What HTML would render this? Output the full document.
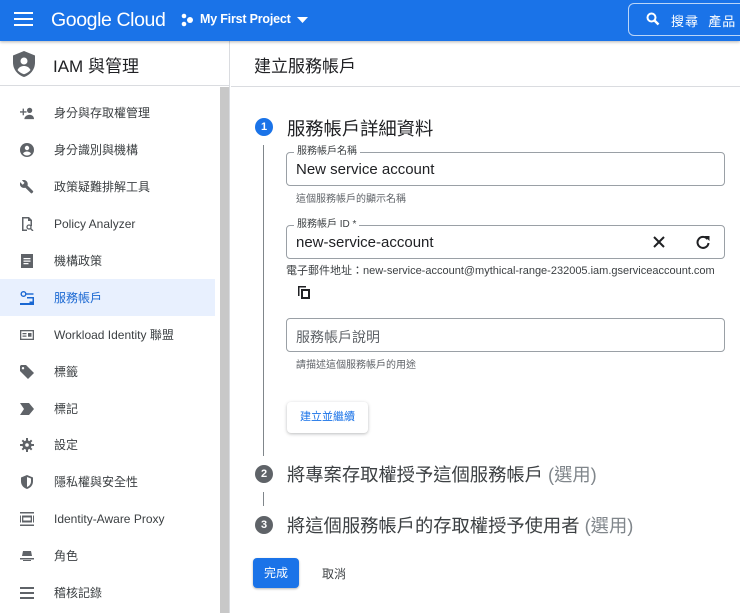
<!DOCTYPE html>
<html><head><meta charset="utf-8"><style>
*{box-sizing:border-box;margin:0;padding:0}
body{width:740px;height:613px;overflow:hidden;background:#fff;font-family:"Liberation Sans","Noto Sans CJK TC",sans-serif;color:#202124;position:relative}
.abs{position:absolute}
.hdr{left:0;top:0;width:740px;height:41px;background:#1a73e8;box-shadow:0 1px 3px rgba(0,0,0,.3);z-index:2}
.side{left:0;top:41px;width:230px;height:572px;border-right:1px solid #dadce0}
.item{position:absolute;left:0;width:215px;height:37px;display:flex;align-items:center;font-size:12px;color:#3c4043}
.item .ic{width:54px;display:flex;justify-content:center;padding-left:0}
.item .ic svg{width:14px;height:14px;fill:#5f6368}
.field{position:absolute;left:286px;width:439px;height:34px;border:1px solid #9aa0a6;border-radius:4px}
.lab{position:absolute;top:-7px;left:7px;background:#fff;padding:0 3px;font-size:10px;color:#3c4043;line-height:12px}
.val{position:absolute;left:9px;top:8px;font-size:15px;color:#202124}
.help{position:absolute;font-size:10px;color:#5f6368}
.circ{position:absolute;width:18px;height:18px;border-radius:50%;color:#fff;font-size:11px;font-weight:bold;text-align:center;line-height:18px}
.step{position:absolute;font-size:18.3px;color:#3c4043}
</style></head><body>
<div class="abs hdr">
 <svg class="abs" style="left:14px;top:12px" width="19" height="14"><rect y="0" width="19" height="2" fill="#fff"/><rect y="6" width="19" height="2" fill="#fff"/><rect y="12" width="19" height="2" fill="#fff"/></svg>
 <div class="abs" style="left:51px;top:9px;font-size:19.5px;color:#fff;letter-spacing:-0.4px">Google Cloud</div>
 <svg class="abs" style="left:180px;top:13px" width="14" height="14"><circle cx="4" cy="3" r="2.3" fill="#fff"/><circle cx="4" cy="11" r="2.3" fill="#fff"/><circle cx="10" cy="7" r="3" fill="#fff"/></svg>
 <div class="abs" style="left:200px;top:12px;font-size:12.5px;color:#fff;font-weight:bold;letter-spacing:-0.2px">My First Project</div>
 <svg class="abs" style="left:297px;top:17px" width="12" height="7"><path d="M0 0h11l-5.5 6z" fill="#fff"/></svg>
 <div class="abs" style="left:628px;top:3px;width:130px;height:33px;border:1px solid rgba(255,255,255,.7);border-radius:6px"></div>
 <svg class="abs" style="left:646px;top:12px" width="14" height="14"><circle cx="5.5" cy="5.5" r="4" stroke="#fff" stroke-width="2" fill="none"/><path d="M8.5 8.5l4 4" stroke="#fff" stroke-width="2.4"/></svg>
 <div class="abs" style="left:671px;top:11px;font-size:13px;color:#fff;letter-spacing:1px">搜尋&nbsp;&nbsp;產品</div>
</div>
<div class="abs side">
 <div class="abs" style="left:0;top:0;width:230px;height:45px;border-bottom:1px solid #dadce0"></div>
 <svg class="abs" style="left:13px;top:10px" width="22" height="26" viewBox="0 0 22 26"><path d="M11 0L0 4.5v7C0 18.5 4.7 24 11 26c6.3-2 11-7.5 11-14.5v-7z" fill="#5f6368"/><circle cx="11" cy="10" r="3.5" fill="#fff"/><path d="M4.5 19c1.5-3 4-4 6.5-4s5 1 6.5 4c-1.6 2-3.7 3.4-6.5 4.2C8.2 22.4 6 21 4.5 19z" fill="#fff"/></svg>
 <div class="abs" style="left:53px;top:11px;font-size:17px;color:#202124">IAM 與管理</div>
 <div class="abs" style="left:220px;top:46px;width:9px;height:526px;background:#c8c8c8"></div>
</div>
<div class="item" style="top:94px"><div class="ic"><svg viewBox="0 0 16 14"><path d="M0 5h3V2h1.5v3h3v1.5h-3v3H3v-3H0z"/><circle cx="11" cy="4" r="3"/><path d="M5 14c0-3 3-5 6-5s5 2 5 5z"/></svg></div>身分與存取權管理</div>
<div class="item" style="top:131px"><div class="ic"><svg viewBox="0 0 14 14"><circle cx="7" cy="7" r="7"/><circle cx="7" cy="5" r="2.2" fill="#fff"/><path d="M3 10.5c1-1.5 2.5-2 4-2s3 .5 4 2c-1 1.2-2.4 2-4 2s-3-.8-4-2z" fill="#fff"/></svg></div>身分識別與機構</div>
<div class="item" style="top:168px"><div class="ic"><svg viewBox="0 0 14 14"><path d="M13 11L7.5 5.5C8 4 7.7 2.3 6.5 1.1 5.2-.1 3.4-.4 1.9.3l2.6 2.6-1.8 1.8L.1 2.1C-.6 3.6-.3 5.4 1 6.7c1.2 1.2 2.9 1.5 4.4 1L11 13.2c.3.3.7.3 1 0l1-1c.3-.3.3-.8 0-1.2z"/></svg></div>政策疑難排解工具</div>
<div class="item" style="top:205px"><div class="ic"><svg viewBox="0 0 14 14"><path d="M2 0h7l3 3v6H10.5V4H8V1.5H3.5v11H7V14H2z"/><circle cx="9" cy="10" r="2" fill="none" stroke="#5f6368" stroke-width="1.3"/><path d="M10.3 11.3L13 14" stroke="#5f6368" stroke-width="1.4"/></svg></div>Policy Analyzer</div>
<div class="item" style="top:242px"><div class="ic"><svg viewBox="0 0 14 14"><path d="M1 0h12v14H1z"/><path d="M3.5 4h7v1.3h-7zM3.5 6.5h7v1.3h-7zM3.5 9h5v1.3h-5z" fill="#fff"/></svg></div>機構政策</div>
<div class="abs" style="left:0;top:279px;width:215px;height:37px;background:#e8f0fe"></div>
<div class="item" style="top:279px;color:#1967d2"><div class="ic"><svg viewBox="0 0 14 14" style="fill:#1967d2"><circle cx="3.5" cy="3" r="2.3" fill="none" stroke="#1967d2" stroke-width="1.4"/><path d="M5.5 2.3h8v1.4h-8z"/><path d="M7 6h7v6H9.5V10.5h3V7.5H7z"/><path d="M0 12h14v2H0z"/></svg></div>服務帳戶</div>
<div class="item" style="top:316px"><div class="ic"><svg viewBox="0 0 14 12"><path d="M0 1h14v10H0z"/><path d="M1.3 2.3h11.4v7.4H1.3z" fill="#fff"/><path d="M2.5 4h4v1.2h-4zM2.5 6.5h4v1.2h-4zM8 4h3.5v3.7H8z"/></svg></div>Workload Identity 聯盟</div>
<div class="item" style="top:353px"><div class="ic"><svg viewBox="0 0 14 14"><path d="M0 1v5l8 8 6-6-8-8H1z"/><circle cx="3" cy="3.2" r="1.2" fill="#fff"/></svg></div>標籤</div>
<div class="item" style="top:390px"><div class="ic"><svg viewBox="0 0 14 12"><path d="M0 0h9l5 6-5 6H0l4-6z"/></svg></div>標記</div>
<div class="item" style="top:426px"><div class="ic"><svg viewBox="0 0 14 14"><circle cx="7" cy="7" r="4.6"/><path d="M6 0h2v3H6zM6 11h2v3H6zM0 6h3v2H0zM11 6h3v2h-3zM1.6 3l1.4-1.4 2 2L3.6 5zM9 10.4l1.4-1.4 2 2L11 12.4zM1.6 11L3.6 9 5 10.4 3 12.4zM9 3.6L11 1.6l1.4 1.4-2 2z"/><circle cx="7" cy="7" r="1.8" fill="#fff"/></svg></div>設定</div>
<div class="item" style="top:463px"><div class="ic"><svg viewBox="0 0 14 14"><path d="M7 0L1 2.5v4C1 10 3.6 13 7 14c3.4-1 6-4 6-7.5v-4z"/><path d="M7 2v10c2.2-.8 4-3 4-5.5V3.5z" fill="#fff"/></svg></div>隱私權與安全性</div>
<div class="item" style="top:500px"><div class="ic"><svg viewBox="0 0 14 14"><path d="M0 0h14v1.5H0zM0 12.5h14V14H0zM2 3.5h10v7H2z"/><path d="M3.3 5.5h7.4v3H3.3z" fill="#fff"/><path d="M0 3.5h1v7H0zM13 3.5h1v7h-1z"/></svg></div>Identity-Aware Proxy</div>
<div class="item" style="top:537px"><div class="ic"><svg viewBox="0 0 14 10"><path d="M3 0h8l1 5H2z"/><path d="M0 7h14v1.5H0z"/><path d="M3 9h8v1H3z"/></svg></div>角色</div>
<div class="item" style="top:574px"><div class="ic"><svg viewBox="0 0 14 12"><path d="M0 0h14v2H0zM0 5h14v2H0zM0 10h14v2H0z"/></svg></div>稽核記錄</div>

<div class="abs" style="left:231px;top:86px;width:509px;height:1px;background:#dadce0"></div>
<div class="abs" style="left:254px;top:52px;font-size:17px;color:#202124">建立服務帳戶</div>

<div class="circ" style="left:255px;top:118px;background:#1a73e8">1</div>
<div class="step" style="left:287px;top:115px;color:#202124">服務帳戶詳細資料</div>
<div class="abs" style="left:263px;top:145px;width:1px;height:311px;background:#80868b"></div>

<div class="field" style="top:152px"><div class="lab">服務帳戶名稱</div><div class="val">New service account</div></div>
<div class="help" style="left:296px;top:190px">這個服務帳戶的顯示名稱</div>
<div class="field" style="top:225px"><div class="lab">服務帳戶 ID *</div><div class="val">new-service-account</div>
 <svg class="abs" style="left:366px;top:10px" width="12" height="12"><path d="M1 1l10 10M11 1L1 11" stroke="#202124" stroke-width="2"/></svg>
 <svg class="abs" style="left:409px;top:9px" width="14" height="14" viewBox="0 0 14 14"><path d="M11.5 4.2A5.5 5.5 0 1 0 12.5 8" stroke="#202124" stroke-width="2" fill="none"/><path d="M8.5 1h5v5z" fill="#202124"/></svg>
</div>
<div class="help" style="left:286px;top:262px;font-size:11px;color:#3c4043">電子郵件地址：new-service-account@mythical-range-232005.iam.gserviceaccount.com</div>
<svg class="abs" style="left:298px;top:286px" width="12" height="13" viewBox="0 0 12 13"><path d="M0 0h8v1.5H1.5V10H0z" fill="#202124"/><path d="M3 3h9v10H3z" fill="#202124"/><path d="M5 5h5v6H5z" fill="#fff"/></svg>
<div class="field" style="top:318px"><div class="val" style="color:#5f6368;font-size:14px">服務帳戶說明</div></div>
<div class="help" style="left:296px;top:356px">請描述這個服務帳戶的用途</div>
<div class="abs" style="left:287px;top:402px;width:81px;height:31px;border-radius:4px;box-shadow:0 1px 3px rgba(60,64,67,.35);font-size:11px;color:#1a73e8;text-align:center;line-height:31px">建立並繼續</div>

<div class="circ" style="left:255px;top:465px;background:#5f6368">2</div>
<div class="step" style="left:287px;top:461px">將專案存取權授予這個服務帳戶 <span style="color:#80868b">(選用)</span></div>
<div class="abs" style="left:263px;top:492px;width:1px;height:14px;background:#80868b"></div>
<div class="circ" style="left:255px;top:516px;background:#5f6368">3</div>
<div class="step" style="left:287px;top:512px">將這個服務帳戶的存取權授予使用者 <span style="color:#80868b">(選用)</span></div>

<div class="abs" style="left:253px;top:558px;width:46px;height:30px;background:#1a73e8;border-radius:4px;box-shadow:0 1px 2px rgba(0,0,0,.3);color:#fff;font-size:12px;text-align:center;line-height:30px">完成</div>
<div class="abs" style="left:322px;top:565px;font-size:12px;color:#3c4043">取消</div>
</body></html>
